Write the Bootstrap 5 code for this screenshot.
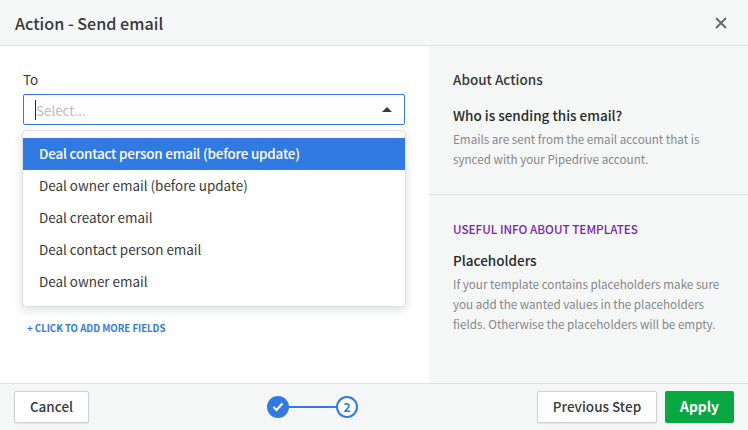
<!DOCTYPE html>
<html lang="en">
<head>
<meta charset="utf-8">
<title>Action - Send email</title>
<link href="https://cdn.jsdelivr.net/npm/bootstrap@5.3.0/dist/css/bootstrap.min.css" rel="stylesheet">
<style>
html,body{height:430px;overflow:hidden}
body{font-family:"Noto Sans CJK SC","Source Sans Pro","Noto Sans",sans-serif;color:#26292c;background:#fff;font-size:13.5px}
.shell{width:748px;height:430px}
.dlg-head{height:46px;background:#f5f6f6;border-bottom:1px solid #dfe1e2;padding:0 21px 0 15px}
.dlg-title{font-size:16.15px;font-weight:500;line-height:24px;margin:0;color:#36393c}
.dlg-body{height:337px}
.pane-left{width:429px;padding:23px 24px 0 23px;position:relative}
.pane-right{width:319px;background:#f5f6f6}
.to-label{font-size:13.5px;line-height:20px;margin-bottom:5px;color:#36393c}
.sel-box{height:31px;border:1px solid #317ae2;border-radius:2px;padding:0 12px 0 11px;width:382px}
.caret-bar{width:1px;height:20px;background:#26292c}
.sel-ph{color:#b9bbbd;font-size:13.4px;line-height:20px}
.caret-up{width:0;height:0;border-left:5.5px solid transparent;border-right:5.5px solid transparent;border-bottom:5px solid #36393c}
.opt-menu{position:absolute;left:22px;top:84px;width:384px;height:177px;background:#fff;border:1px solid #dfe1e2;border-radius:4px;box-shadow:0 3px 10px rgba(38,41,44,.16);padding:7px 0 0;z-index:2}
.opt-row{height:32px;line-height:30px;padding-left:16px;font-size:13.45px;color:#36393c}
.opt-row.on{background:#317ae2;color:#fff;font-weight:500;letter-spacing:-.2px}
.add-more{position:absolute;left:27px;top:275px;font-size:9.6px;line-height:14px;font-weight:700;color:#317ae2;text-transform:uppercase;text-decoration:none}
.info-a{height:149px;padding:23px 24px 0;border-bottom:1px solid #dfe1e2}
.info-b{padding:24px 24px 0}
.info-h{font-size:13.5px;font-weight:500;line-height:20px;margin:0 0 16px;color:#36393c}
.info-sub{font-size:13.5px;font-weight:500;line-height:20px;margin:0 0 4px;color:#26292c}
.info-p{font-size:11.65px;line-height:20px;color:#85888b;margin:0}
.info-tag{font-size:11.7px;font-weight:500;line-height:20px;color:#7a23b5;text-transform:uppercase;margin:0 0 11px}
.dlg-foot{height:47px;background:#f5f6f6;border-top:1px solid #dfe1e2;padding:0 14px}
.btn-ghost{height:32px;background:#fff;border:1px solid #ced0d2;border-radius:2px;font-size:13.5px;font-weight:500;line-height:1;color:#36393c;padding:0;box-shadow:0 1px 1px rgba(38,41,44,.08)}
.btn-cancel{width:75px}
.btn-prev{width:120px}
.btn-apply{width:69px;height:32px;background:#08a742;border:0;border-radius:2px;color:#fff;font-size:13.8px;font-weight:600;line-height:1;padding:0}
.stepper{width:91px;margin-left:-1px}
.step-done{width:22px;height:22px;border-radius:50%;background:#317ae2;flex:none}
.step-line{flex:1;height:2px;background:#317ae2}
.step-next{width:22px;height:22px;border-radius:50%;border:2px solid #317ae2;background:#fff;color:#317ae2;font-size:12px;font-weight:700;line-height:17px;text-align:center;flex:none}
</style>
</head>
<body>
<div class="shell d-flex flex-column">
  <header class="dlg-head d-flex align-items-center justify-content-between">
    <h1 class="dlg-title">Action - Send email</h1>
    <svg width="12" height="12" viewBox="0 0 12 12" aria-label="Close"><path d="M1 1l10 10M11 1L1 11" stroke="#6a6d70" stroke-width="2" fill="none"/></svg>
  </header>
  <div class="dlg-body d-flex">
    <div class="pane-left">
      <div class="to-label">To</div>
      <div class="sel-box d-flex align-items-center justify-content-between">
        <div class="d-flex align-items-center"><span class="caret-bar"></span><span class="sel-ph">Select...</span></div>
        <span class="caret-up"></span>
      </div>
      <div class="opt-menu">
        <div class="opt-row on">Deal contact person email (before update)</div>
        <div class="opt-row">Deal owner email (before update)</div>
        <div class="opt-row">Deal creator email</div>
        <div class="opt-row">Deal contact person email</div>
        <div class="opt-row">Deal owner email</div>
      </div>
      <a class="add-more" href="#">+ Click to add more fields</a>
    </div>
    <aside class="pane-right">
      <div class="info-a">
        <h2 class="info-h">About Actions</h2>
        <h3 class="info-sub">Who is sending this email?</h3>
        <p class="info-p">Emails are sent from the email account that is<br>synced with your Pipedrive account.</p>
      </div>
      <div class="info-b">
        <div class="info-tag">Useful info about templates</div>
        <h3 class="info-sub">Placeholders</h3>
        <p class="info-p">If your template contains placeholders make sure<br>you add the wanted values in the placeholders<br>fields. Otherwise the placeholders will be empty.</p>
      </div>
    </aside>
  </div>
  <footer class="dlg-foot d-flex align-items-center justify-content-between">
    <button type="button" class="btn btn-ghost btn-cancel">Cancel</button>
    <div class="stepper d-flex align-items-center">
      <span class="step-done d-flex align-items-center justify-content-center">
        <svg width="12" height="10" viewBox="0 0 12 10"><path d="M1.5 5l3 3 6-6.5" stroke="#fff" stroke-width="2" fill="none"/></svg>
      </span>
      <span class="step-line"></span>
      <span class="step-next">2</span>
    </div>
    <div class="d-flex gap-2">
      <button type="button" class="btn btn-ghost btn-prev">Previous Step</button>
      <button type="button" class="btn btn-apply">Apply</button>
    </div>
  </footer>
</div>
<script src="https://cdn.jsdelivr.net/npm/bootstrap@5.3.0/dist/js/bootstrap.bundle.min.js"></script>
</body>
</html>
